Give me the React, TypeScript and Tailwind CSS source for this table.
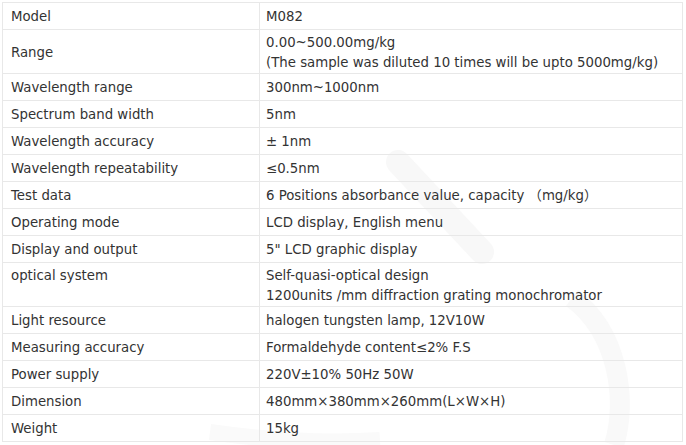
import React from "react";

const rows: { k: string; v: string[]; top?: boolean }[] = [
  { k: "Model", v: ["M082"] },
  { k: "Range", v: ["0.00~500.00mg/kg", "(The sample was diluted 10 times will be upto 5000mg/kg)"] },
  { k: "Wavelength range", v: ["300nm~1000nm"] },
  { k: "Spectrum band width", v: ["5nm"] },
  { k: "Wavelength accuracy", v: ["± 1nm"] },
  { k: "Wavelength repeatability", v: ["≤0.5nm"] },
  { k: "Test data", v: ["6 Positions absorbance value, capacity （mg/kg）"] },
  { k: "Operating mode", v: ["LCD display, English menu"] },
  { k: "Display and output", v: ["5\" LCD graphic display"] },
  { k: "optical system", v: ["Self-quasi-optical design", "1200units /mm diffraction grating monochromator"], top: true },
  { k: "Light resource", v: ["halogen tungsten lamp, 12V10W"] },
  { k: "Measuring accuracy", v: ["Formaldehyde content≤2% F.S"] },
  { k: "Power supply", v: ["220V±10% 50Hz 50W"] },
  { k: "Dimension", v: ["480mm×380mm×260mm(L×W×H)"] },
  { k: "Weight", v: ["15kg"] },
];

export default function App() {
  return (
    <div className="relative w-[686px] h-[445px] bg-white overflow-hidden" style={{ fontFamily: '"DejaVu Sans", "Noto Sans CJK SC", sans-serif' }}>
      <svg className="absolute inset-0 pointer-events-none" width="686" height="445" viewBox="0 0 686 445">
        <path d="M398 162 L482 252" stroke="#f8f8f8" strokeWidth="24" fill="none" strokeLinecap="round" />
        <path d="M572 298 C 618 332, 628 400, 614 445" stroke="#f9f9f9" strokeWidth="20" fill="none" />
        <path d="M210 432 C 265 440, 320 444, 380 440" stroke="#fafafa" strokeWidth="16" fill="none" />
      </svg>
      <div className="relative pt-[2px] pl-[2px]">
        <table className="border-collapse w-[681px] text-[13.3px] text-[#333333] leading-[20px]">
          <colgroup>
            <col className="w-[257px]" />
            <col />
          </colgroup>
          <tbody>
            {rows.map((r) => (
              <tr key={r.k} className={r.v.length > 1 ? "h-[44px]" : "h-[27px]"}>
                <td className={`border border-[#e8e8e8] pl-[8px] pr-2 ${r.top ? "align-top pt-[3px] pb-0" : "align-middle pt-[2px] pb-0"}`}>{r.k}</td>
                <td className={`border border-[#e8e8e8] pl-[6px] pr-2 ${r.top ? "align-top pt-[3px] pb-0" : "align-middle pt-[2px] pb-0"}`}>
                  {r.v.map((line) => (
                    <div key={line} className="whitespace-nowrap">{line}</div>
                  ))}
                </td>
              </tr>
            ))}
          </tbody>
        </table>
      </div>
    </div>
  );
}
